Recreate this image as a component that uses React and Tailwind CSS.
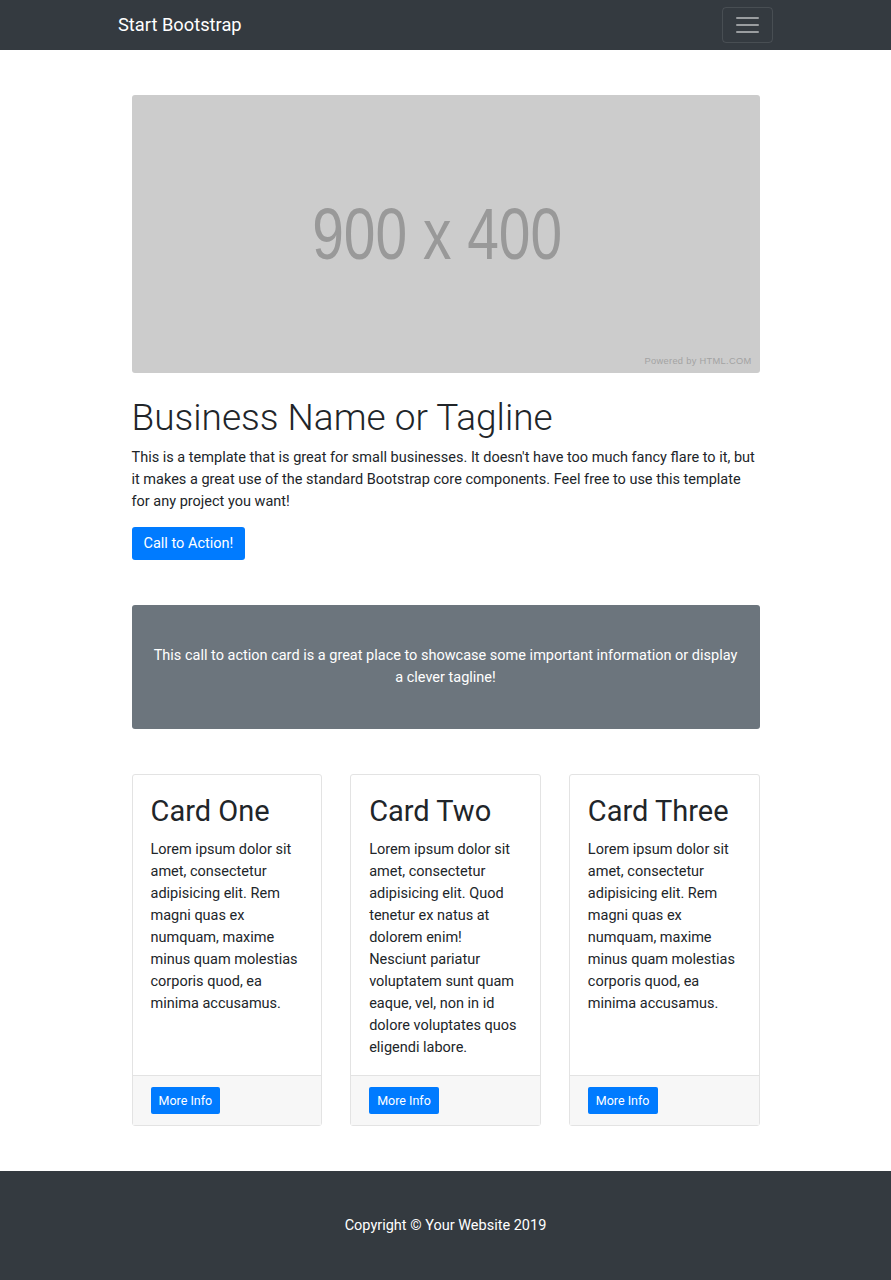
const cards = [
  {
    title: 'Card One',
    text: 'Lorem ipsum dolor sit amet, consectetur adipisicing elit. Rem magni quas ex numquam, maxime minus quam molestias corporis quod, ea minima accusamus.',
  },
  {
    title: 'Card Two',
    text: 'Lorem ipsum dolor sit amet, consectetur adipisicing elit. Quod tenetur ex natus at dolorem enim! Nesciunt pariatur voluptatem sunt quam eaque, vel, non in id dolore voluptates quos eligendi labore.',
  },
  {
    title: 'Card Three',
    text: 'Lorem ipsum dolor sit amet, consectetur adipisicing elit. Rem magni quas ex numquam, maxime minus quam molestias corporis quod, ea minima accusamus.',
  },
]

export default function App() {
  return (
    <div className="min-h-screen bg-white text-[#212529] font-['Roboto',sans-serif]">
      {/* navbar */}
      <nav className="bg-[#343a40] h-[50px]">
        <div className="w-[655px] mx-auto h-full flex items-center justify-between">
          <span className="text-white text-[18.3px] leading-none">Start Bootstrap</span>
          <button className="w-[51px] h-[36px] border border-white/10 rounded-[4px] flex flex-col items-center justify-center gap-[5px]">
            <span className="block w-[23px] h-[2px] bg-white/50 rounded-full"></span>
            <span className="block w-[23px] h-[2px] bg-white/50 rounded-full"></span>
            <span className="block w-[23px] h-[2px] bg-white/50 rounded-full"></span>
          </button>
        </div>
      </nav>

      <main className="w-[628px] mx-auto pt-[45px] pb-[45px]">
        {/* hero */}
        <div className="relative h-[278px] bg-[#cccccc] rounded-[3px] flex items-center justify-center pr-[16px]">
          <span className="font-['Liberation_Sans',sans-serif] text-[72px] leading-none text-[#999999] scale-x-[0.79] whitespace-nowrap">
            900 x 400
          </span>
          <span className="absolute right-[8px] bottom-[4px] font-['Liberation_Sans',sans-serif] text-[9.3px] text-[#a3a3a3] tracking-[0.3px]">
            Powered by HTML.COM
          </span>
        </div>

        <h1 className="mt-[23px] text-[37px] font-light leading-[1.2]">Business Name or Tagline</h1>
        <p className="mt-[7px] text-[14.5px] leading-[22px]">
          This is a template that is great for small businesses. It doesn't have too much fancy flare to it, but it makes a great use of the standard Bootstrap core components. Feel free to use this template for any project you want!
        </p>
        <button className="mt-[14px] h-[33px] px-[12px] bg-[#007bff] text-white text-[14.5px] rounded-[3px]">
          Call to Action!
        </button>

        {/* call to action */}
        <div className="mt-[45px] h-[124px] bg-[#6c757d] rounded-[3px] flex items-center justify-center px-[20px]">
          <p className="text-white text-[14.5px] leading-[22px] text-center">
            This call to action card is a great place to showcase some important information or display a clever tagline!
          </p>
        </div>

        {/* cards */}
        <div className="mt-[45px] grid grid-cols-3 gap-[28px]">
          {cards.map(card => (
            <div key={card.title} className="h-[352px] border border-[#e3e3e3] rounded-[3px] flex flex-col">
              <div className="flex-1 px-[18px] pt-[19px]">
                <h2 className="text-[29px] leading-[34px]">{card.title}</h2>
                <p className="mt-[11px] text-[14.5px] leading-[22px]">{card.text}</p>
              </div>
              <div className="h-[50px] bg-[#f7f7f7] border-t border-[#e3e3e3] flex items-center px-[18px]">
                <button className="h-[27px] px-[8px] bg-[#007bff] text-white text-[12.5px] rounded-[2px]">
                  More Info
                </button>
              </div>
            </div>
          ))}
        </div>
      </main>

      {/* footer */}
      <footer className="bg-[#343a40] h-[109px] flex items-center justify-center">
        <p className="text-white text-[14.5px]">Copyright © Your Website 2019</p>
      </footer>
    </div>
  )
}
